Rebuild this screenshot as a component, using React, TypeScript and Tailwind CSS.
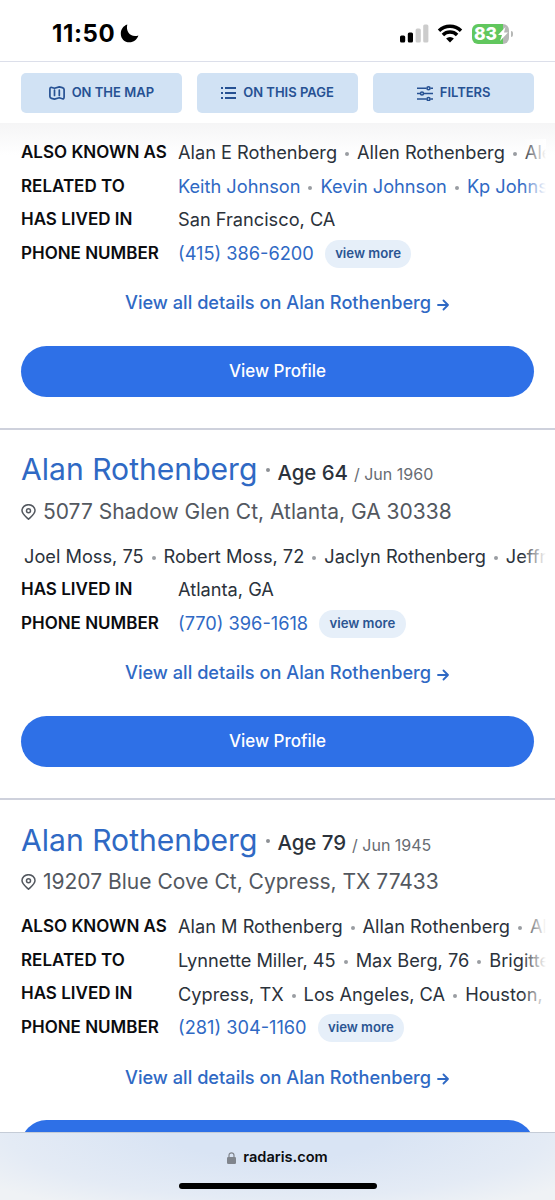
import React from "react";

type Row = { label?: string; items: string[]; link?: boolean; phone?: boolean };
type Person = { name: string; age: string; born: string; address: string; rows: Row[]; action?: string };

const firstRows: Row[] = [
  { label: "ALSO KNOWN AS", items: ["Alan E Rothenberg", "Allen Rothenberg", "Ale"] },
  { label: "RELATED TO", items: ["Keith Johnson", "Kevin Johnson", "Kp Johns"], link: true },
  { label: "HAS LIVED IN", items: ["San Francisco, CA"] },
  { label: "PHONE NUMBER", items: ["(415) 386-6200"], phone: true, link: true },
];

const people: Person[] = [
  {
    name: "Alan Rothenberg",
    age: "Age 64",
    born: "/ Jun 1960",
    address: "5077 Shadow Glen Ct, Atlanta, GA 30338",
    action: "View Profile",
    rows: [
      { items: ["Joel Moss, 75", "Robert Moss, 72", "Jaclyn Rothenberg", "Jeffr"] },
      { label: "HAS LIVED IN", items: ["Atlanta, GA"] },
      { label: "PHONE NUMBER", items: ["(770) 396-1618"], phone: true, link: true },
    ],
  },
  {
    name: "Alan Rothenberg",
    age: "Age 79",
    born: "/ Jun 1945",
    address: "19207 Blue Cove Ct, Cypress, TX 77433",
    rows: [
      { label: "ALSO KNOWN AS", items: ["Alan M Rothenberg", "Allan Rothenberg", "Al"] },
      { label: "RELATED TO", items: ["Lynnette Miller, 45", "Max Berg, 76", "Brigitte"] },
      { label: "HAS LIVED IN", items: ["Cypress, TX", "Los Angeles, CA", "Houston,"] },
      { label: "PHONE NUMBER", items: ["(281) 304-1160"], phone: true, link: true },
    ],
  },
];

function Dot() {
  return <span className="mx-2 mt-[3px] size-[4px] shrink-0 rounded-full bg-[#9a9da2]" />;
}

function InfoRow({ row }: { row: Row }) {
  return (
    <div className="flex h-[33.67px] items-center">
      {row.label && (
        <div className="w-[157px] shrink-0 pb-px text-[17px] font-semibold whitespace-nowrap text-[#0b0c0f]">{row.label}</div>
      )}
      <div className={`relative flex min-w-0 flex-1 items-center overflow-hidden pb-px text-[18.220px] whitespace-nowrap ${row.label ? "" : "pl-[3px]"} ${row.link ? "text-[#2f69c4]" : "text-[#2b323b]"}`}>
        {row.items.map((item, i) => (
          <React.Fragment key={item}>
            {i > 0 && <Dot />}
            <span>{item}</span>
          </React.Fragment>
        ))}
        {row.phone && (
          <span className="mt-px ml-[11px] flex h-7 w-[86.500px] items-center justify-center rounded-full bg-[#e6eff9] text-[13.200px] font-semibold text-[#2b5592]">view more</span>
        )}
        {row.items.length > 1 && <span className="absolute inset-y-0 right-0 w-[24px] bg-linear-to-r from-white/0 to-white" />}
      </div>
    </div>
  );
}

function Actions({ label }: { label?: string }) {
  return (
    <>
      <div className="mt-4 flex h-8 items-center pl-[125px] text-[18.200px] font-medium whitespace-nowrap text-[#2f69c4]">
        <span>View all details on Alan Rothenberg</span>
        <svg className="mt-[4px] ml-[6px] h-3 w-3" viewBox="0 0 12 12" fill="none" stroke="currentColor" strokeWidth="1.8" strokeLinecap="round" strokeLinejoin="round">
          <path d="M1 6h10M6.5 1.5 11 6l-4.500 4.500" />
        </svg>
      </div>
      <div className="mx-[21px] mt-[26.500px] flex h-[51.500px] items-center justify-center rounded-full bg-[#2e70e7] pt-px text-[17px] font-medium text-white">
        {label}
      </div>
    </>
  );
}

function Card({ person }: { person: Person }) {
  return (
    <section className="shrink-0 border-t-2 border-[#ced1dc] pt-4 pb-[31px]">
      <div className="flex h-[48px] items-center pl-[21px] whitespace-nowrap">
        <h2 className="text-[30.100px] text-[#2f69c4]">{person.name}</h2>
        <span className="mt-px mr-[7px] ml-[9px] size-[4px] rounded-full bg-[#8d9095]" />
        <span className="mt-[7px] text-[20.400px] font-medium text-[#2b323b]">{person.age}</span>
        <span className="mt-[9px] ml-[6px] text-[16px] text-[#686c73]">{person.born}</span>
      </div>
      <div className="flex h-[36px] items-center pl-[21px] text-[21px] whitespace-nowrap text-[#53585f]">
        <svg className="mr-[7px] h-4 w-[15px]" viewBox="0 0 15 16" fill="none" stroke="currentColor" strokeWidth="1.500">
          <path d="M7.500 15.200C5.500 13.200 1 10.200 1 6.600a6.500 5.900 0 0 1 13 0c0 3.600-4.500 6.600-6.500 8.600Z" strokeLinejoin="round" />
          <circle cx="7.500" cy="6.700" r="2" />
        </svg>
        {person.address}
      </div>
      <div className="mt-[10.500px] pr-[9px] pl-[21px]">
        {person.rows.map((r, i) => <InfoRow key={i} row={r} />)}
      </div>
      <Actions label={person.action} />
    </section>
  );
}

const tabClass = "flex flex-1 items-center justify-center rounded-[5px] bg-[#d1e2f4] text-[13px] font-semibold text-[#265193]";

export default function App() {
  return (
    <div className="flex h-[1200px] w-[555px] flex-col overflow-hidden bg-white font-['Inter',sans-serif]">
      <header className="flex h-[62px] shrink-0 items-center border-b border-[#dcdfea] pt-[6px] pr-[46px] pl-[52px]">
        <span className="text-[24px] font-bold tracking-[0.6px] text-black">11:50</span>
        <svg className="ml-[5px] h-[19px] w-[19px]" viewBox="0 0 19 19">
          <path d="M7.300.5C5.500 7.500 10.500 14 18.400 11.500 17 15.800 13.600 18.300 9.500 18.300 4.500 18.300.8 14.600.8 9.700.8 5.300 3.300 1.900 7.300.5Z" />
        </svg>
        <span className="flex-1" />
        <svg className="h-[19px] w-[29px]" viewBox="0 0 29 19">
          <rect x="0" y="11.500" width="5.200" height="7" rx="1.500" />
          <rect x="7.800" y="8.500" width="5.200" height="10" rx="1.500" />
          <rect x="15.600" y="4.500" width="5.200" height="14" rx="1.500" fill="#ccc" />
          <rect x="23.200" y="0.500" width="5.200" height="18" rx="1.500" fill="#ccc" />
        </svg>
        <svg className="mr-px ml-[8px] h-[19px] w-[26px]" viewBox="0 0 26 19" fill="none" stroke="black" strokeWidth="3.500">
          <path d="M2 6.700a15.900 15.900 0 0 1 22 0M5.900 11a10.200 10.200 0 0 1 14.200 0" />
          <path d="M13 18.400 9.100 14.500a5.600 5.600 0 0 1 7.800 0Z" fill="black" stroke="none" />
        </svg>
        <div className="relative ml-[8px] flex h-[20px] w-[37px] items-center rounded-[6px] bg-linear-to-r from-[#61c75e] from-84% to-[#b6b8b6] to-84% pl-[2px]">
          <span className="text-[17.500px] leading-none font-extrabold text-white">83</span>
          <svg className="ml-px h-[14px] w-[10px]" viewBox="0 0 10 14" fill="white"><path d="M7.500 0 0 8h4L2 14l8-8.500H6Z" /></svg>
          <span className="absolute top-[7px] -right-[4px] h-[6px] w-[2px] rounded-r-full bg-[#b6b8b6]" />
        </div>
      </header>

      <nav className="flex h-[61px] shrink-0 gap-[15.500px] px-[21px] pt-[11px] pb-[10px]">
        <div className={tabClass}>
          <svg className="mr-[7px] h-[14px] w-[16px]" viewBox="0 0 16 14" fill="none" stroke="currentColor" strokeWidth="1.700" strokeLinejoin="round" strokeLinecap="round">
            <path d="M.9 3.200Q.9 1 2.800 1.500L5.500 2.300 10.300.9 13.300 1.600Q15.100 2 15.100 3.600V11Q15.100 13.200 13.300 12.700L10.300 11.800 5.500 13.100 2.500 12.400Q.9 12 .9 10.600ZM5.500 4.200v5.300M10.300 4.200v5.300" />
          </svg>
          ON THE MAP
        </div>
        <div className={tabClass}>
          <svg className="mr-[7px] h-[12px] w-[15px]" viewBox="0 0 15 12" fill="none" stroke="currentColor" strokeWidth="1.800">
            <path d="M4 1h11M4 6h11M4 11h11M0 1h2M0 6h2M0 11h2" />
          </svg>
          ON THIS PAGE
        </div>
        <div className={tabClass}>
          <svg className="mr-[7px] h-[15px] w-[16px]" viewBox="0 0 16 15" fill="none" stroke="currentColor" strokeWidth="1.600">
            <path d="M0 2.300h9.500M13.500 2.300H16M0 7.500h3M7 7.500h9M0 13h9.500M13.500 13H16" />
            <circle cx="11.500" cy="2.300" r="1.500" /><circle cx="5" cy="7.500" r="1.500" /><circle cx="11.500" cy="13" r="1.500" />
          </svg>
          FILTERS
        </div>
      </nav>

      <main className="flex min-h-0 flex-1 flex-col overflow-hidden">
        <section className="shrink-0 bg-linear-to-b from-[#f5f5f6] to-white to-[32px] pt-[13.500px] pb-[30.500px]">
          <div className="pr-[9px] pl-[21px]">
            {firstRows.map((r, i) => <InfoRow key={i} row={r} />)}
          </div>
          <Actions label="View Profile" />
        </section>
        {people.map((p) => <Card key={p.age} person={p} />)}
      </main>

      <footer className="flex h-[68px] shrink-0 flex-col items-center border-t border-[#c5ccd7] bg-[radial-gradient(ellipse_65%_130%_at_50%_0%,#d9e4f4_30%,#e4ebf5_75%,#eff2f5_100%)]">
        <div className="flex h-[50px] items-center text-[14.600px] font-semibold text-[#0b0c0f]">
          <svg className="mr-[7px] h-3 w-[9px]" viewBox="0 0 9 12">
            <rect x="0" y="5" width="9" height="7" rx="1.300" fill="#80858d" />
            <path d="M2 5.500V3.300a2.500 2.500 0 0 1 5 0v2.200" fill="none" stroke="#80858d" strokeWidth="1.200" />
          </svg>
          radaris.com
        </div>
        <div className="h-[6px] w-[198px] rounded-full bg-black" />
      </footer>
    </div>
  );
}
